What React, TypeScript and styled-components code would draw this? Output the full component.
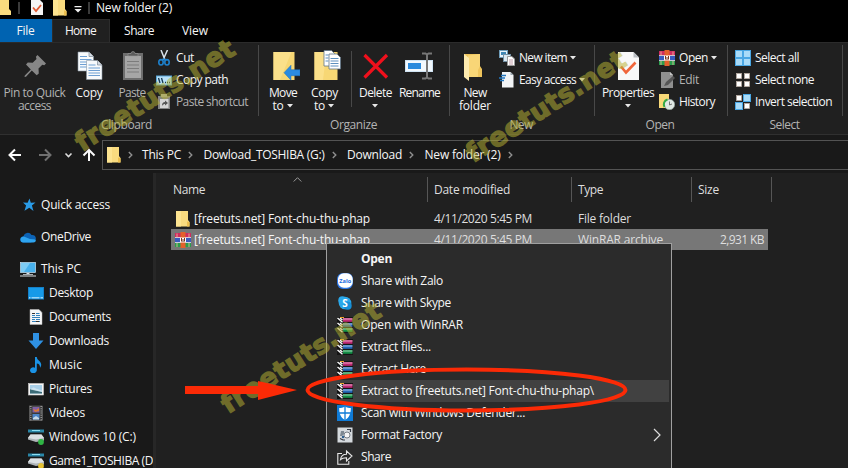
import React, { useLayoutEffect, useRef } from "react";
import styled, { createGlobalStyle, css } from "styled-components";

const GlobalStyle = createGlobalStyle`
  * { box-sizing: border-box; }
  body { margin: 0; background: #202020; overflow: hidden; }
`;

/* ---------- text ---------- */

type Tone = "normal" | "dim" | "header" | "caption";
const tones: Record<Tone, string> = {
  normal: "#f6f6f6",
  dim: "#b2b2b2",
  header: "#dedede",
  caption: "#b4b4b4",
};

const TextBox = styled.span<{ $w: number; $tone: Tone; $bold?: boolean }>`
  display: block;
  flex: none;
  width: ${(p) => p.$w}px;
  color: ${(p) => tones[p.$tone]};
  font-weight: ${(p) => (p.$bold ? 700 : 400)};
  white-space: nowrap;
`;

/* Spreads or tightens the letters so that the text fills its column. */
function Label({ children, w, tone = "normal", bold }: { children: string; w: number; tone?: Tone; bold?: boolean }) {
  const ref = useRef<HTMLSpanElement>(null);
  useLayoutEffect(() => {
    const el = ref.current;
    if (!el) return;
    el.style.letterSpacing = "0px";
    const natural = el.getBoundingClientRect().width;
    el.style.letterSpacing = `${(w + 1 - natural) / children.length}px`;
  }, [children, w]);
  return (
    <TextBox $w={w} $tone={tone} $bold={bold}>
      <span ref={ref}>{children}</span>
    </TextBox>
  );
}

/* ---------- window ---------- */

const Window = styled.div`
  position: relative;
  display: flex;
  flex-direction: column;
  width: 848px;
  height: 468px;
  overflow: hidden;
  background: #202020;
  font: 12px/16px "Open Sans", "Noto Sans", sans-serif;
`;

const TitleBar = styled.header`
  display: flex;
  height: 19px;
  padding-bottom: 3px;
  align-items: center;
  background: #000;
`;

const TitleSlot = styled.div<{ $w: number }>`
  width: ${(p) => p.$w}px;
  height: 16px;
  flex: none;
`;

const TitleRule = styled.div<{ $after: number }>`
  width: 2px;
  height: 12px;
  margin-right: ${(p) => p.$after}px;
  background: #3b3b3b;
`;

const Tabs = styled.nav`
  display: flex;
  height: 23px;
  background: #000;
`;

const Tab = styled.div<{ $w: number; $kind?: "file" | "active" }>`
  display: flex;
  width: ${(p) => p.$w}px;
  padding-right: 2px;
  justify-content: center;
  align-items: center;
  ${(p) => p.$kind === "file" && css`background: #0063b1;`}
  ${(p) => p.$kind === "active" && css`background: #202020; border: 1px solid #2c2c2c; border-bottom: 0;`}
`;

/* ---------- ribbon ---------- */

const Ribbon = styled.section`
  display: flex;
  height: 93px;
  border-top: 1px solid #2b2b2b;
  border-bottom: 1px solid #303030;
  background: #202020;
`;

const GroupBox = styled.div<{ $w: number }>`
  display: flex;
  flex-direction: column;
  flex: none;
  width: ${(p) => p.$w}px;
  height: 91px;
  padding-top: 7px;
`;

const GroupBody = styled.div<{ $left: number }>`
  display: flex;
  height: 67px;
  padding-left: ${(p) => p.$left}px;
`;

const GroupCaption = styled.div<{ $shift: number }>`
  display: flex;
  height: 16px;
  padding-right: ${(p) => p.$shift}px;
  justify-content: center;
`;

const Separator = styled.div`
  width: 1px;
  height: 71px;
  margin-top: 2px;
  background: #484848;
`;

const InnerSeparator = styled.div`
  width: 1px;
  height: 56px;
  margin: 1px 3px 0 5px;
  background: #484848;
`;

const BigButton = styled.div<{ $w: number }>`
  display: flex;
  flex-direction: column;
  align-items: center;
  flex: none;
  width: ${(p) => p.$w}px;
  line-height: 13px;
  & > svg:first-child { margin-bottom: 4px; }
`;

const LabelLine = styled.div`
  display: flex;
  height: 13px;
  padding-right: 2px;
  align-items: center;
  gap: 4px;
`;

const SmallList = styled.div`
  display: flex;
  flex-direction: column;
  margin-top: -3px;
`;

const SmallButton = styled.div`
  display: flex;
  height: 22px;
  align-items: center;
  gap: 4px;
`;

const DownArrow = () => (
  <svg width="6" height="4" viewBox="0 0 6 4"><path d="M0 0h6L3 3.4z" fill="#e8e8e8" /></svg>
);

function Group({ w, left, caption, cw, shift = 2, children }: { w: number; left: number; caption: string; cw: number; shift?: number; children: React.ReactNode }) {
  return (
    <>
      <GroupBox $w={w}>
        <GroupBody $left={left}>{children}</GroupBody>
        <GroupCaption $shift={shift}><Label w={cw} tone="caption">{caption}</Label></GroupCaption>
      </GroupBox>
      <Separator />
    </>
  );
}

/* ---------- icons ---------- */

const Big = ({ children }: { children: React.ReactNode }) => (
  <svg width="32" height="32" viewBox="0 0 32 32">{children}</svg>
);
const Small = ({ children }: { children: React.ReactNode }) => (
  <svg width="16" height="16" viewBox="0 0 16 16">{children}</svg>
);

const PinIcon = () => (
  <Big>
    <path d="M18.500 5L27 13.500 25.300 15.300l-2-.5-3.800 3.800.3 4.900-2.100 1.800-4.900-4.900L7 26.800 5.500 27l.3-1.500 6-6L7 14.500l1.800-2.100 4.900.3 3.800-3.800-.6-2.100z" fill="#868686" />
  </Big>
);
const Page = ({ x, y }: { x: number; y: number }) => (
  <g transform={`translate(${x} ${y})`}>
    <path d="M0 0h11l4.500 4.500V19H0z" fill="#f7fafc" stroke="#8a97a5" strokeWidth=".6" />
    <path d="M11 0v4.500h4.500" fill="#d5dce4" stroke="#6c7a88" strokeWidth=".6" />
    <path d="M2 4.500h7M2 7.500h11.500M2 10h11.500M2 12.500h11.500M2 15h11.500" stroke="#6d9fd3" strokeWidth="1" />
  </g>
);
const CopyIcon = () => <Big><Page x={4} y={2} /><Page x={12.500} y={10.500} /></Big>;
const PasteIcon = () => (
  <Big>
    <rect x="6" y="3" width="20" height="27" fill="#6e6e6e" />
    <rect x="8" y="6" width="16" height="22" fill="#a6a6a6" />
    <path d="M11 6V3.500h3a2 2 0 0 1 4 0H21V6z" fill="#5c5c5c" stroke="#999" strokeWidth=".6" />
    <path d="M10 11.500h12M10 15h12M10 18.500h12M10 22h12" stroke="#7c7c7c" />
  </Big>
);
const CutIcon = () => (
  <Small>
    <path d="M5 0l4 10M11.500 0L7 10" stroke="#d9e3ec" strokeWidth="1.500" />
    <ellipse cx="5" cy="12.300" rx="2.200" ry="2.700" fill="none" stroke="#1d80cc" strokeWidth="1.600" />
    <ellipse cx="11" cy="12.300" rx="2.200" ry="2.700" fill="none" stroke="#1d80cc" strokeWidth="1.600" />
    <path d="M7 8.500l3 2" stroke="#1d80cc" strokeWidth="1.600" />
  </Small>
);
const CopyPathIcon = () => (
  <Small>
    <rect x=".5" y="4" width="15" height="9" fill="#b9e1f8" stroke="#58a6d8" />
    <path d="M2.500 6l1.500 5M5.500 6L7 11M9 10.500h1M11 10.500h1M13 10.500h1" stroke="#163850" strokeWidth="1.300" />
  </Small>
);
const PasteShortcutIcon = () => (
  <Small>
    <rect x="2" y="2" width="12" height="13" fill="#858585" />
    <rect x="5" y="0" width="6" height="3" fill="#aaa" />
    <rect x="4" y="5" width="8.500" height="9" fill="#d5d5d5" />
    <path d="M6 12c0-3 1-4 3-4V6.500l3 2.500-3 2.500V10c-1 0-2 .5-3 2z" fill="#555" />
  </Small>
);
const MoveIcon = () => (
  <Big>
    <rect x="5.500" y="2" width="21" height="28" fill="#f7d774" />
    <path d="M5.500 2h18L12 30H5.500z" fill="#fbe08a" />
    <path d="M16 22.700l7-7.500v4.500h9v6h-9v4.500z" fill="#2b8be0" stroke="#1c6fbd" strokeWidth=".5" />
  </Big>
);
const CopyToIcon = () => (
  <Big>
    <rect x="5.500" y="2" width="23" height="28" fill="#f7d774" />
    <path d="M5.500 2h12L14 30H5.500z" fill="#fbe08a" />
    <path d="M15 .5h7.500l3 3v12.500H15z" fill="#fff" stroke="#607486" strokeWidth=".8" />
    <path d="M20 4h8l3.500 3.500V19H20z" fill="#fff" stroke="#607486" strokeWidth=".8" />
    <path d="M16.500 5h3M16.500 8h3M16.500 11h3M21.500 8.500h8M21.500 11h8M21.500 13.500h8M21.500 16h8" stroke="#5c8fbe" />
  </Big>
);
const DeleteIcon = () => <Big><path d="M4.500 5L27 27.500M27 5L4.500 27.500" stroke="#f0101c" strokeWidth="3.200" /></Big>;
const RenameIcon = () => (
  <Big>
    <rect x="1.500" y="10.500" width="27" height="11" fill="#f2f8fd" stroke="#cfe3f3" />
    <rect x="4" y="13" width="13" height="6" fill="#2a8add" />
    <path d="M18 3.500h3.500l1.500 1 1.500-1H28M23 4v24M18 28.500h3.500l1.500-1 1.500 1H28" fill="none" stroke="#777" strokeWidth="2" />
  </Big>
);
const NewFolderIcon = () => (
  <Big>
    <path d="M4 4h16v12l2 3v8H4z" fill="#eec45c" />
    <path d="M8 5.500l12-1.500v12l-2 4v7H8z" fill="#f8d677" />
    <path d="M4 4l5 4v23l-5-4z" fill="#fdeaae" />
  </Big>
);
const NewItemIcon = () => (
  <Small>
    <rect x=".5" y=".5" width="8" height="7" fill="#e8f2fa" stroke="#6f9cb9" />
    <rect x="2" y="2" width="5" height="3" fill="#3f87b5" />
    <rect x="4.500" y="4.500" width="7" height="7" fill="#dbe8f1" stroke="#7591a5" />
    <path d="M8.500 6.500h4.500l2.500 2.500v6.500h-7z" fill="#fff" stroke="#999" />
    <path d="M10 10h4M10 12h4M10 14h4" stroke="#a78" strokeWidth=".7" />
  </Small>
);
const EasyIcon = () => (
  <Small>
    <path d="M3 0h8.500l3 3v12.500H3z" fill="#f1f3f5" />
    <path d="M11.500 0v3h3z" fill="#9aa5ae" />
    <path d="M2 3.500h5M0 6h6M1 8.500h4" stroke="#2376bd" strokeWidth="1.300" />
  </Small>
);
const PropertiesIcon = () => (
  <Big>
    <path d="M5 2h15.500L26 7.500V30H5z" fill="#f8f8f8" />
    <path d="M20.500 2v5.500H26z" fill="#b9bec2" />
    <path d="M8 16.500l5 6 9.500-10" fill="none" stroke="#f0653a" strokeWidth="2.600" />
  </Big>
);
const RarIcon = () => (
  <Small>
    <rect x="0" y="1" width="16" height="4.500" fill="#cf2c5f" />
    <rect x="0" y="6" width="16" height="4.500" fill="#3a5cc0" />
    <rect x="0" y="11" width="16" height="4" fill="#2a9d4c" />
    <path d="M0 5.500h16M0 10.500h16" stroke="#e8e8f0" strokeWidth=".8" />
    <rect x="5.500" y="0" width="5" height="16" fill="#e3602c" />
    <path d="M5 5.500h6v5H5z" fill="#fff" />
    <path d="M6.500 6v3.500M8 7v3M9.500 6v3.500" stroke="#7b3420" />
    <path d="M2 1.500v4M14 1.500v4M2 11v4M14 11v4" stroke="#f0c0a0" strokeWidth=".8" />
  </Small>
);
const EditIcon = () => (
  <Small>
    <path d="M2 0h9l3 3v13H2z" fill="#8f8f8f" />
    <path d="M11 0v3h3z" fill="#c5c5c5" />
    <path d="M5 14l2-4 7-6 2 2-7 7z" fill="#555" />
  </Small>
);
const HistoryIcon = () => (
  <Small>
    <path d="M0 0h10v14H0z" fill="#f8d978" />
    <circle cx="10.500" cy="10.500" r="5.200" fill="#dfe8e4" stroke="#8d9c96" strokeWidth=".7" />
    <path d="M10.500 7.500v3.500l2.500-1" fill="none" stroke="#555" strokeWidth=".8" />
    <path d="M8.500 5.500C5 6.500 4 10 5.500 13" fill="none" stroke="#35a947" strokeWidth="2" />
  </Small>
);

const selectCells = [[0, 0], [8, 0], [0, 8], [8, 8]];
function SelectIcon({ on }: { on: boolean[] }) {
  return (
    <Small>
      {selectCells.map(([x, y], i) =>
        on[i] ? (
          <rect key={i} x={x + 0.500} y={y + 0.500} width="7" height="7" fill="#a9dbf8" stroke="#4aa7e4" />
        ) : (
          <rect key={i} x={x + 1.500} y={y + 1.500} width="5" height="5" fill="#fff" stroke="#b8aca4" strokeWidth=".8" />
        )
      )}
    </Small>
  );
}

const FolderIcon = () => (
  <svg width="14" height="16" viewBox="0 0 14 16">
    <path d="M0 0h12v9l1.500 2v4.500H0z" fill="#f9db7f" />
    <path d="M11 10.500l2.500.5v4.500H11z" fill="#edbf4f" />
    <path d="M0 0h5v15.500H0z" fill="#fde491" />
  </svg>
);

const StarIcon = () => (
  <Small><path d="M9.500 1.500l1.300 4.300 4.700-.2-3.600 3 1.600 5.400-4.200-3.200-4.800 3 1.600-5.200L3 5.600l4.600.1z" fill="#2a9be6" /></Small>
);
const CloudIcon = () => (
  <Small>
    <path d="M3.500 7.500a4.300 4.300 0 0 1 8-1.500 3.500 3.500 0 0 1 4.300 4L11 13.500H3A3 3 0 0 1 3.500 7.500z" fill="#0c63b5" />
    <path d="M.5 11a3 3 0 0 1 4-3.200L10 10l5.800.5a2.600 2.600 0 0 1-2.500 3H3a2.600 2.600 0 0 1-2.500-2.500z" fill="#2ea4ef" />
  </Small>
);
const PcIcon = () => (
  <Small>
    <rect x=".5" y="1.500" width="15" height="10" fill="#48b1ed" stroke="#c9e4f4" strokeWidth=".7" />
    <path d="M1 2h9L4 11H1z" fill="#7dccf5" />
    <path d="M6.500 12h3v1.500h-3zM3 13h10v.8H3zM0 14.500h16v1H0z" fill="#dbe2e6" />
  </Small>
);
const DesktopIcon = () => (
  <Small>
    <rect x=".5" y="2.500" width="15" height="11.500" fill="#179ae8" stroke="#1580c8" />
    <path d="M1 12.700h14" stroke="#9bd5f6" strokeWidth="1.400" strokeDasharray="1.500 1 8 1 3" />
  </Small>
);
const DocIcon = () => (
  <Small>
    <path d="M2 .5h9l3 3v12H2z" fill="#f6f6f6" stroke="#bbb" strokeWidth=".5" />
    <path d="M4 6.500h3M8 4.500h3.500M8 6.500h4M4 8.500h8M4 10.500h3M8 10.500h4M4 12.500h8" stroke="#327fba" />
    <path d="M4 4.500h3M8 12.500h3" stroke="#333" />
  </Small>
);
const DownloadIcon = () => <Small><path d="M5 0h6v7.500h4.500L8 16 .5 7.500H5z" fill="#2f91e3" /></Small>;
const MusicIcon = () => (
  <Small>
    <path d="M7 0h1.800c.2 3.500 4.700 4.200 4.400 8-.1 1.200-.6 2.200-1.200 2.700.2-2.900-1-4-3.200-4.300V13a3.400 2.900 0 1 1-1.800-2.300z" fill="#1b93e6" />
  </Small>
);
const PictureIcon = () => (
  <Small>
    <rect x=".5" y="2.500" width="15" height="11.500" fill="#f5f5f5" stroke="#ccc" strokeWidth=".6" />
    <rect x="2" y="4" width="12" height="8.500" fill="#a8cfe8" />
    <path d="M2 8l4 1 8 2v1.500H2z" fill="#3b6b77" />
    <path d="M5 6.500c2 0 4 2 9 3v1.500L2 8.500z" fill="#e6f1f6" opacity=".6" />
  </Small>
);
const VideoIcon = () => (
  <Small>
    <rect x="1.500" y="1" width="13" height="14.500" fill="#3a3a3a" stroke="#888" strokeWidth=".5" />
    <path d="M2.800 1v15M13.200 1v15" stroke="#aaa" strokeWidth="1.200" strokeDasharray="1 1.200" />
    <rect x="4.500" y="2" width="7" height="5.500" fill="#7f60a5" />
    <rect x="4.500" y="9" width="7" height="5.500" fill="#4d86c9" />
    <path d="M5 4l3 1 3-2v3L7 7z" fill="#d97a35" />
    <path d="M5 13l3-2 3 2v1.500H5z" fill="#c6dae8" />
  </Small>
);
const DriveIcon = ({ dot }: { dot: string }) => (
  <Small>
    <path d="M0 .5h16v3H0z" fill="#2a87a8" />
    <path d="M4 1.500h8" stroke="#8cdcf0" />
    <path d="M2.500 5.500h11L16 9v2.500L8 13 0 10.500V9z" fill="#aeb4b8" />
    <path d="M2.500 5.500h11L16 9l-8 1.500L0 9z" fill="#dce0e3" />
    <circle cx="13" cy="13" r="2.900" fill={dot} />
  </Small>
);

const ZaloIcon = () => (
  <Small>
    <rect width="16" height="16" rx="6" fill="#2d78e8" />
    <rect x="1" y=".3" width="14.700" height="14.500" rx="5.800" fill="#fff" />
    <text x="8.200" y="9.500" fontSize="5.600" fontWeight="700" fontFamily="Open Sans, sans-serif" textAnchor="middle" fill="#1768e0" textLength="12">Zalo</text>
  </Small>
);
const SkypeIcon = () => (
  <Small>
    <circle cx="8" cy="8" r="6.300" fill="#2aa8ea" />
    <circle cx="5.300" cy="5.300" r="4" fill="#2aa8ea" />
    <circle cx="10.700" cy="10.700" r="4" fill="#168fd8" />
    <text x="8" y="11.600" fontSize="10" fontWeight="700" fontFamily="Open Sans, sans-serif" textAnchor="middle" fill="#fff">S</text>
  </Small>
);

const volumes = [
  { fill: "#c02a74", y: 1 },
  { fill: "#2468b8", y: 6 },
  { fill: "#149048", y: 11 },
];
const BooksIcon = () => (
  <Small>
    <rect x="0" y="0" width="16" height="16" fill="#141414" />
    {volumes.map((v) => (
      <g key={v.fill} transform={`translate(0 ${v.y})`}>
        <path d="M.5 0l5 4.200M3 0l2.500 2" stroke="#fafafa" strokeWidth="1.400" />
        <rect x="6" y="0" width="9.500" height="3.800" fill={v.fill} />
        <path d="M6 1h9.500" stroke="#fff" strokeWidth=".9" opacity=".65" />
      </g>
    ))}
    <path d="M3 .5h4" stroke="#e8a32c" strokeWidth="1" />
  </Small>
);
const DefenderIcon = () => (
  <Small>
    <rect width="16" height="16" fill="#0f7bd7" />
    <path d="M8 1.500c2 1 4 1.500 5.800 1.500 0 6-1.500 9.500-5.800 12C3.700 12.500 2.200 9 2.200 3 4 3 6 2.500 8 1.500z" fill="#fff" />
    <path d="M8 1v14.500M2 8h12" stroke="#0f7bd7" strokeWidth="1.300" />
  </Small>
);
const FactoryIcon = () => (
  <Small>
    <rect x=".5" y=".5" width="15" height="15" fill="#d5dade" />
    <path d="M4 4h3v3L5 9H3z" fill="#7e8993" />
    <circle cx="10" cy="8" r="3" fill="#f5f5f5" stroke="#5a646e" strokeWidth=".8" />
    <path d="M10 2.500h3.500V5M3 11.500l3 1.500h2" fill="none" stroke="#343a44" strokeWidth="1.200" />
    <circle cx="6" cy="10" r="1.200" fill="#2d5f8e" />
  </Small>
);
const ShareIcon = () => (
  <Small>
    <path d="M5 4.500H.8v10.700h11V12" fill="none" stroke="#e8e8e8" strokeWidth="1.100" />
    <path d="M3.500 10.500c.5-3.800 3-5.300 6-5.300V2l5.500 5-5.500 5V8.700c-2.500 0-4.500.3-6 1.800z" fill="none" stroke="#e8e8e8" strokeWidth="1.100" />
  </Small>
);

/* ---------- address bar ---------- */

const AddressRow = styled.div`
  display: flex;
  height: 38px;
  padding-top: 5px;
  background: #191919;
`;
const NavButtons = styled.div`
  display: flex;
  width: 102px;
  height: 30px;
  align-items: center;
`;
const AddressBox = styled.div`
  display: flex;
  flex: 1;
  height: 30px;
  padding-left: 4px;
  align-items: center;
  border: 1px solid #535353;
  border-right: 0;
`;
const CrumbSlot = styled.div<{ $first?: boolean }>`
  display: flex;
  width: ${(p) => (p.$first ? 21 : 23.500)}px;
  padding-right: 2px;
  justify-content: center;
`;
const Crumb = ({ first }: { first?: boolean }) => (
  <CrumbSlot $first={first}>
    <svg width="5" height="8" viewBox="0 0 5 8"><path d="M.8 1l3 3-3 3" fill="none" stroke="#8f8f8f" strokeWidth="1.400" /></svg>
  </CrumbSlot>
);

/* ---------- body ---------- */

const Body = styled.div`
  display: flex;
  flex: 1;
  min-height: 0;
`;
const Sidebar = styled.aside`
  flex: none;
  width: 156px;
  padding-top: 20px;
  overflow: hidden;
  background: #191919;
  border-right: 3px solid #272727;
`;
const SideItem = styled.div<{ $root?: boolean; $gap?: boolean }>`
  display: flex;
  height: 24px;
  margin-bottom: ${(p) => (p.$gap ? 8 : 0)}px;
  padding-left: ${(p) => (p.$root ? 20 : 28)}px;
  align-items: center;
  gap: 5px;
`;
const Main = styled.main`
  flex: 1;
  min-width: 0;
  padding-top: 4px;
`;
const HeaderRow = styled.div`
  display: grid;
  grid-template-columns: 272px 144px 120px 80px;
  height: 25px;
`;
const HeaderCell = styled.div<{ $left: number }>`
  position: relative;
  display: flex;
  padding-left: ${(p) => p.$left}px;
  align-items: center;
  border-right: 1px solid #565656;
`;
const SortMark = styled.svg`
  position: absolute;
  left: 137px;
  top: 0;
`;
const FileList = styled.div`
  margin: 6px 0 0 15px;
`;
const FileRow = styled.div<{ $selected?: boolean }>`
  display: grid;
  grid-template-columns: 263px 144px 119px 71px;
  width: 597px;
  height: 21px;
  align-items: center;
  background: ${(p) => (p.$selected ? "#777777" : "transparent")};
`;
const NameCell = styled.div`
  display: flex;
  padding-left: 4px;
  align-items: center;
  gap: 3px;
`;
const NameIcon = styled.div`
  display: flex;
  width: 16px;
  height: 16px;
  justify-content: center;
  & > svg { flex: none; }
`;
const SizeCell = styled.div`
  display: flex;
  padding-right: 5px;
  justify-content: flex-end;
`;

/* ---------- context menu and overlays ---------- */

const Menu = styled.div`
  position: absolute;
  left: 326px;
  top: 243px;
  width: 346px;
  height: 240px;
  padding: 4px 2px;
  border: 1px solid #a0a0a0;
  background: #2b2b2b;
`;
const MenuItem = styled.div<{ $active?: boolean }>`
  display: flex;
  height: 22px;
  padding: 0 8px 0 8px;
  align-items: center;
  background: ${(p) => (p.$active ? "#414141" : "transparent")};
`;
const MenuIcon = styled.div`
  display: flex;
  width: 24px;
  height: 16px;
`;
const SubArrow = styled.svg`
  margin-left: auto;
`;
const Watermark = styled.div<{ $x: number; $y: number }>`
  position: absolute;
  left: ${(p) => p.$x}px;
  top: ${(p) => p.$y}px;
  width: 196px;
  height: 30px;
  margin: -15px 0 0 -98px;
  transform: rotate(-32.500deg);
  color: rgb(184, 178, 52);
  opacity: 0.52;
  font: 700 26px/30px "DejaVu Sans", sans-serif;
  letter-spacing: 0.6px;
  -webkit-text-stroke: 1.4px rgb(184, 178, 52);
  text-align: center;
  white-space: nowrap;
  pointer-events: none;
`;
const Annotation = styled.svg`
  position: absolute;
  left: 180px;
  top: 360px;
`;

const sideItems: { text: string; w: number; icon: React.ReactNode; root?: boolean; gap?: boolean }[] = [
  { text: "Quick access", w: 68, icon: <StarIcon />, root: true, gap: true },
  { text: "OneDrive", w: 49, icon: <CloudIcon />, root: true, gap: true },
  { text: "This PC", w: 39, icon: <PcIcon />, root: true },
  { text: "Desktop", w: 43, icon: <DesktopIcon /> },
  { text: "Documents", w: 61, icon: <DocIcon /> },
  { text: "Downloads", w: 59, icon: <DownloadIcon /> },
  { text: "Music", w: 32, icon: <MusicIcon /> },
  { text: "Pictures", w: 42, icon: <PictureIcon /> },
  { text: "Videos", w: 35, icon: <VideoIcon /> },
  { text: "Windows 10 (C:)", w: 86, icon: <DriveIcon dot="#2fb644" /> },
  { text: "Game1_TOSHIBA (D", w: 103, icon: <DriveIcon dot="#e6c233" /> },
];

const menuItems: { text: string; w: number; icon?: React.ReactNode; bold?: boolean; active?: boolean; sub?: boolean }[] = [
  { text: "Open", w: 30, bold: true },
  { text: "Share with Zalo", w: 81, icon: <ZaloIcon /> },
  { text: "Share with Skype", w: 89, icon: <SkypeIcon /> },
  { text: "Open with WinRAR", w: 101, icon: <BooksIcon /> },
  { text: "Extract files...", w: 69, icon: <BooksIcon /> },
  { text: "Extract Here", w: 64, icon: <BooksIcon /> },
  { text: "Extract to [freetuts.net] Font-chu-thu-phap\\", w: 232, icon: <BooksIcon />, active: true },
  { text: "Scan with Windows Defender...", w: 163, icon: <DefenderIcon /> },
  { text: "Format Factory", w: 80, icon: <FactoryIcon />, sub: true },
  { text: "Share", w: 29, icon: <ShareIcon /> },
];

const files = [
  { name: "[freetuts.net] Font-chu-thu-phap", date: "4/11/2020 5:45 PM", type: "File folder", tw: 52, size: "", icon: <FolderIcon /> },
  { name: "[freetuts.net] Font-chu-thu-phap", date: "4/11/2020 5:45 PM", type: "WinRAR archive", tw: 84, size: "2,931 KB", icon: <RarIcon />, selected: true },
];

export default function App() {
  return (
    <Window>
      <GlobalStyle />
      <TitleBar>
        <TitleSlot $w={18}>
          <svg width="11" height="16" viewBox="0 0 11 16"><path d="M0 0h9v9l2 2v4H0z" fill="#f9db7f" /></svg>
        </TitleSlot>
        <TitleRule $after={11} />
        <TitleSlot $w={22}>
          <svg width="12" height="16" viewBox="0 0 12 16"><path d="M0 0h9l3 3v12H0z" fill="#f4f4f4" /><path d="M2 7.500l3 3.500 5-6" fill="none" stroke="#de5a34" strokeWidth="1.800" /></svg>
        </TitleSlot>
        <TitleSlot $w={21}><FolderIcon /></TitleSlot>
        <TitleSlot $w={14}>
          <svg width="8" height="16" viewBox="0 0 8 16"><path d="M.5 6h7v1.200h-7zM.5 9h7L4 12.500z" fill="#f0f0f0" /></svg>
        </TitleSlot>
        <TitleRule $after={6} />
        <Label w={75}>New folder (2)</Label>
      </TitleBar>
      <Tabs>
        <Tab $w={52} $kind="file"><Label w={17}>File</Label></Tab>
        <Tab $w={58} $kind="active"><Label w={30}>Home</Label></Tab>
        <Tab $w={59}><Label w={29}>Share</Label></Tab>
        <Tab $w={53}><Label w={25}>View</Label></Tab>
      </Tabs>
      <Ribbon>
        <Group w={258} left={0} caption="Clipboard" cw={50} shift={6}>
          <BigButton $w={70}>
            <PinIcon />
            <LabelLine><Label w={61} tone="dim">Pin to Quick</Label></LabelLine>
            <LabelLine><Label w={32} tone="dim">access</Label></LabelLine>
          </BigButton>
          <BigButton $w={39}><CopyIcon /><LabelLine><Label w={26}>Copy</Label></LabelLine></BigButton>
          <BigButton $w={47}><PasteIcon /><LabelLine><Label w={26} tone="dim">Paste</Label></LabelLine></BigButton>
          <SmallList>
            <SmallButton><CutIcon /><Label w={17}>Cut</Label></SmallButton>
            <SmallButton><CopyPathIcon /><Label w={51}>Copy path</Label></SmallButton>
            <SmallButton><PasteShortcutIcon /><Label w={71} tone="dim">Paste shortcut</Label></SmallButton>
          </SmallList>
        </Group>
        <Group w={190} left={4} caption="Organize" cw={46}>
          <BigButton $w={41}>
            <MoveIcon />
            <LabelLine><Label w={27}>Move</Label></LabelLine>
            <LabelLine><Label w={10}>to</Label><DownArrow /></LabelLine>
          </BigButton>
          <BigButton $w={42}>
            <CopyToIcon />
            <LabelLine><Label w={26}>Copy</Label></LabelLine>
            <LabelLine><Label w={10}>to</Label><DownArrow /></LabelLine>
          </BigButton>
          <InnerSeparator />
          <BigButton $w={42}><DeleteIcon /><LabelLine><Label w={32}>Delete</Label></LabelLine><LabelLine><DownArrow /></LabelLine></BigButton>
          <BigButton $w={46}><RenameIcon /><LabelLine><Label w={40}>Rename</Label></LabelLine></BigButton>
        </Group>
        <Group w={144} left={2} caption="New" cw={22} shift={3}>
          <BigButton $w={47}>
            <NewFolderIcon />
            <LabelLine><Label w={22}>New</Label></LabelLine>
            <LabelLine><Label w={31}>folder</Label></LabelLine>
          </BigButton>
          <SmallList>
            <SmallButton><NewItemIcon /><Label w={47}>New item</Label><DownArrow /></SmallButton>
            <SmallButton><EasyIcon /><Label w={56}>Easy access</Label><DownArrow /></SmallButton>
          </SmallList>
        </Group>
        <Group w={132} left={3} caption="Open" cw={28} shift={3}>
          <BigButton $w={61}><PropertiesIcon /><LabelLine><Label w={51}>Properties</Label></LabelLine><LabelLine><DownArrow /></LabelLine></BigButton>
          <SmallList>
            <SmallButton><RarIcon /><Label w={28}>Open</Label><DownArrow /></SmallButton>
            <SmallButton><EditIcon /><Label w={19} tone="dim">Edit</Label></SmallButton>
            <SmallButton><HistoryIcon /><Label w={35}>History</Label></SmallButton>
          </SmallList>
        </Group>
        <Group w={114} left={7} caption="Select" cw={29}>
          <SmallList>
            <SmallButton><SelectIcon on={[true, true, true, true]} /><Label w={43}>Select all</Label></SmallButton>
            <SmallButton><SelectIcon on={[false, false, false, false]} /><Label w={58}>Select none</Label></SmallButton>
            <SmallButton><SelectIcon on={[false, true, true, false]} /><Label w={76}>Invert selection</Label></SmallButton>
          </SmallList>
        </Group>
      </Ribbon>
      <AddressRow>
        <NavButtons>
          <svg width="102" height="30" viewBox="0 0 102 30" fill="none" strokeWidth="2">
            <path d="M21 15H10M15 9.500L9.500 15l5.500 5.500" stroke="#fafafa" />
            <path d="M39 15h11M45 9.500l5.500 5.500-5.500 5.500" stroke="#707070" />
            <path d="M65.500 13.500l3 3 3-3" stroke="#dcdcdc" strokeWidth="1.600" />
            <path d="M89 21V10M83.500 15.500L89 10l5.500 5.500" stroke="#fafafa" />
          </svg>
        </NavButtons>
        <AddressBox>
          <FolderIcon />
          <Crumb first /><Label w={38}>This PC</Label>
          <Crumb /><Label w={120}>Dowload_TOSHIBA (G:)</Label>
          <Crumb /><Label w={54}>Download</Label>
          <Crumb /><Label w={75}>New folder (2)</Label>
          <Crumb />
        </AddressBox>
      </AddressRow>
      <Body>
        <Sidebar>
          {sideItems.map((s) => (
            <SideItem key={s.text} $root={s.root} $gap={s.gap}>{s.icon}<Label w={s.w}>{s.text}</Label></SideItem>
          ))}
        </Sidebar>
        <Main>
          <HeaderRow>
            <HeaderCell $left={17}>
              <Label w={31} tone="header">Name</Label>
              <SortMark width="9" height="5" viewBox="0 0 9 5"><path d="M.7 4.500l3.800-3.800 3.800 3.800" fill="none" stroke="#9a9a9a" /></SortMark>
            </HeaderCell>
            <HeaderCell $left={6}><Label w={75} tone="header">Date modified</Label></HeaderCell>
            <HeaderCell $left={6}><Label w={24} tone="header">Type</Label></HeaderCell>
            <HeaderCell $left={6}><Label w={20} tone="header">Size</Label></HeaderCell>
          </HeaderRow>
          <FileList>
            {files.map((f) => (
              <FileRow key={f.type} $selected={f.selected}>
                <NameCell><NameIcon>{f.icon}</NameIcon><Label w={175}>{f.name}</Label></NameCell>
                <Label w={97} tone="header">{f.date}</Label>
                <Label w={f.tw} tone="header">{f.type}</Label>
                <SizeCell>{f.size && <Label w={43} tone="header">{f.size}</Label>}</SizeCell>
              </FileRow>
            ))}
          </FileList>
        </Main>
      </Body>
      <Menu>
        {menuItems.map((m) => (
          <MenuItem key={m.text} $active={m.active}>
            <MenuIcon>{m.icon}</MenuIcon>
            <Label w={m.w} bold={m.bold}>{m.text}</Label>
            {m.sub && (
              <SubArrow width="8" height="14" viewBox="0 0 8 14"><path d="M1 1l6 6-6 6" fill="none" stroke="#dcdcdc" strokeWidth="1.200" /></SubArrow>
            )}
          </MenuItem>
        ))}
      </Menu>
      <Watermark $x={155} $y={95}>freetuts.net</Watermark>
      <Watermark $x={546} $y={106}>freetuts.net</Watermark>
      <Watermark $x={301} $y={357}>freetuts.net</Watermark>
      <Annotation width="460" height="60" viewBox="0 0 460 60">
        <path d="M5 26h73v-5l39 9-39 10v-6H5z" fill="#fb2a06" />
        <ellipse cx="286.500" cy="30" rx="159" ry="20.500" fill="none" stroke="#fb2a06" strokeWidth="4" />
      </Annotation>
    </Window>
  );
}
